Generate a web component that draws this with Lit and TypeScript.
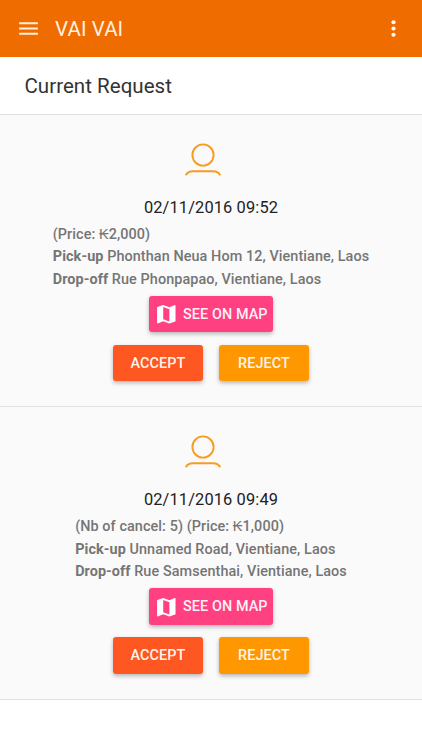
import { LitElement, html, css } from "lit";
import { customElement, property } from "lit/decorators.js";

interface RideRequest {
  date: string;
  summary: string;
  pickup: string;
  dropoff: string;
}

const requests: RideRequest[] = [
  {
    date: "02/11/2016 09:52",
    summary: "(Price: ₭2,000)",
    pickup: "Phonthan Neua Hom 12, Vientiane, Laos",
    dropoff: "Rue Phonpapao, Vientiane, Laos",
  },
  {
    date: "02/11/2016 09:49",
    summary: "(Nb of cancel: 5) (Price: ₭1,000)",
    pickup: "Unnamed Road, Vientiane, Laos",
    dropoff: "Rue Samsenthai, Vientiane, Laos",
  },
];

@customElement("request-card")
export class RequestCard extends LitElement {
  @property({ attribute: false }) request!: RideRequest;

  static styles = css`
    :host {
      display: flex;
      flex-direction: column;
      align-items: center;
      box-sizing: border-box;
      height: 292.4px;
      padding-top: 28px;
      border-bottom: 1px solid #e0e0e0;
      background: #fafafa;
    }
    .avatar {
      display: block;
      width: 36px;
      height: 34px;
      margin-right: 16px;
    }
    .date {
      margin: 20.9px 0 0;
      font-size: 16.4px;
      font-weight: 400;
      line-height: 20px;
      letter-spacing: 0.13px;
      color: #212121;
    }
    .details {
      margin-top: 5.8px;
      font-size: 14.4px;
      font-weight: 500;
      line-height: 22.4px;
      letter-spacing: 0.085px;
      color: #757575;
      white-space: nowrap;
    }
    .details p {
      margin: 0;
    }
    b {
      font-weight: 700;
    }
    .btn {
      display: flex;
      align-items: center;
      justify-content: center;
      box-sizing: border-box;
      width: 90px;
      height: 36.6px;
      padding: 1px 0 0;
      border: 0;
      border-radius: 3px;
      font: 500 14.4px Roboto, sans-serif;
      letter-spacing: 0.1px;
      color: #fff4ea;
      box-shadow: 0 2px 4px rgba(0, 0, 0, 0.28);
    }
    .map {
      width: 124px;
      margin-top: 4.8px;
      gap: 4px;
      background: #ff4081;
      color: #fff0f6;
    }
    .map svg {
      width: 24.6px;
      height: 24.6px;
      fill: #fff;
    }
    .actions {
      display: flex;
      gap: 16px;
      margin-top: 12.2px;
    }
    .accept {
      background: #ff5722;
    }
    .reject {
      background: #ff9800;
    }
  `;

  render() {
    const r = this.request;
    return html`
      <svg class="avatar" viewBox="0 0 36 34" fill="none" stroke="#f89c20" stroke-width="1.9">
        <circle cx="18" cy="12" r="10.6" />
        <path d="M.7 32.2C2.5 29.3 5 28.3 8 28.3h20c3 0 5.500 1 7.300 3.900" />
      </svg>
      <h3 class="date">${r.date}</h3>
      <div class="details">
        <p>${r.summary}</p>
        <p><b>Pick-up</b> ${r.pickup}</p>
        <p><b>Drop-off</b> ${r.dropoff}</p>
      </div>
      <button class="btn map">
        <svg viewBox="0 0 24 24">
          <path
            d="M20.500 3l-.16.030L15 5.100 9 3 3.360 4.900c-.21.070-.36.250-.36.480V20.500c0 .280.220.500.500.500l.16-.030L9 18.900l6 2.100 5.640-1.900c.21-.070.360-.250.360-.480V3.500c0-.280-.220-.500-.500-.500zM15 19l-6-2.110V5l6 2.110V19z"
          />
        </svg>
        <span>SEE ON MAP</span>
      </button>
      <div class="actions">
        <button class="btn accept">ACCEPT</button>
        <button class="btn reject">REJECT</button>
      </div>
    `;
  }
}

@customElement("app-root")
export class AppRoot extends LitElement {
  static styles = css`
    :host {
      display: block;
      height: 750px;
      overflow: hidden;
      background: #fff;
      font-family: Roboto, sans-serif;
    }
    .bar {
      display: flex;
      align-items: center;
      box-sizing: border-box;
      height: 57px;
      padding: 0 16px;
      background: #ef6c00;
      color: #fff0e0;
    }
    .icon {
      width: 25px;
      height: 25px;
      fill: currentColor;
    }
    .title {
      flex: 1;
      margin: 0 0 0 14px;
      font-size: 20.5px;
      font-weight: 400;
      letter-spacing: 0.1px;
    }
    .more {
      fill: #fff;
    }
    .heading {
      box-sizing: border-box;
      height: 58.1px;
      margin: 0;
      padding-left: 24.5px;
      border-bottom: 1px solid #e0e0e0;
      font-size: 20.5px;
      font-weight: 400;
      line-height: 58px;
      letter-spacing: 0.03px;
      color: #333;
    }
  `;

  render() {
    return html`
      <header class="bar">
        <svg class="icon" viewBox="0 0 24 24">
          <path d="M3 18h18v-2H3v2zm0-5h18v-2H3v2zm0-7v2h18V6H3z" />
        </svg>
        <h1 class="title">VAI VAI</h1>
        <svg class="icon more" viewBox="0 0 24 24">
          <circle cx="12" cy="6" r="2" />
          <circle cx="12" cy="12" r="2" />
          <circle cx="12" cy="18" r="2" />
        </svg>
      </header>
      <h2 class="heading">Current Request</h2>
      ${requests.map((r) => html`<request-card .request=${r}></request-card>`)}
    `;
  }
}
